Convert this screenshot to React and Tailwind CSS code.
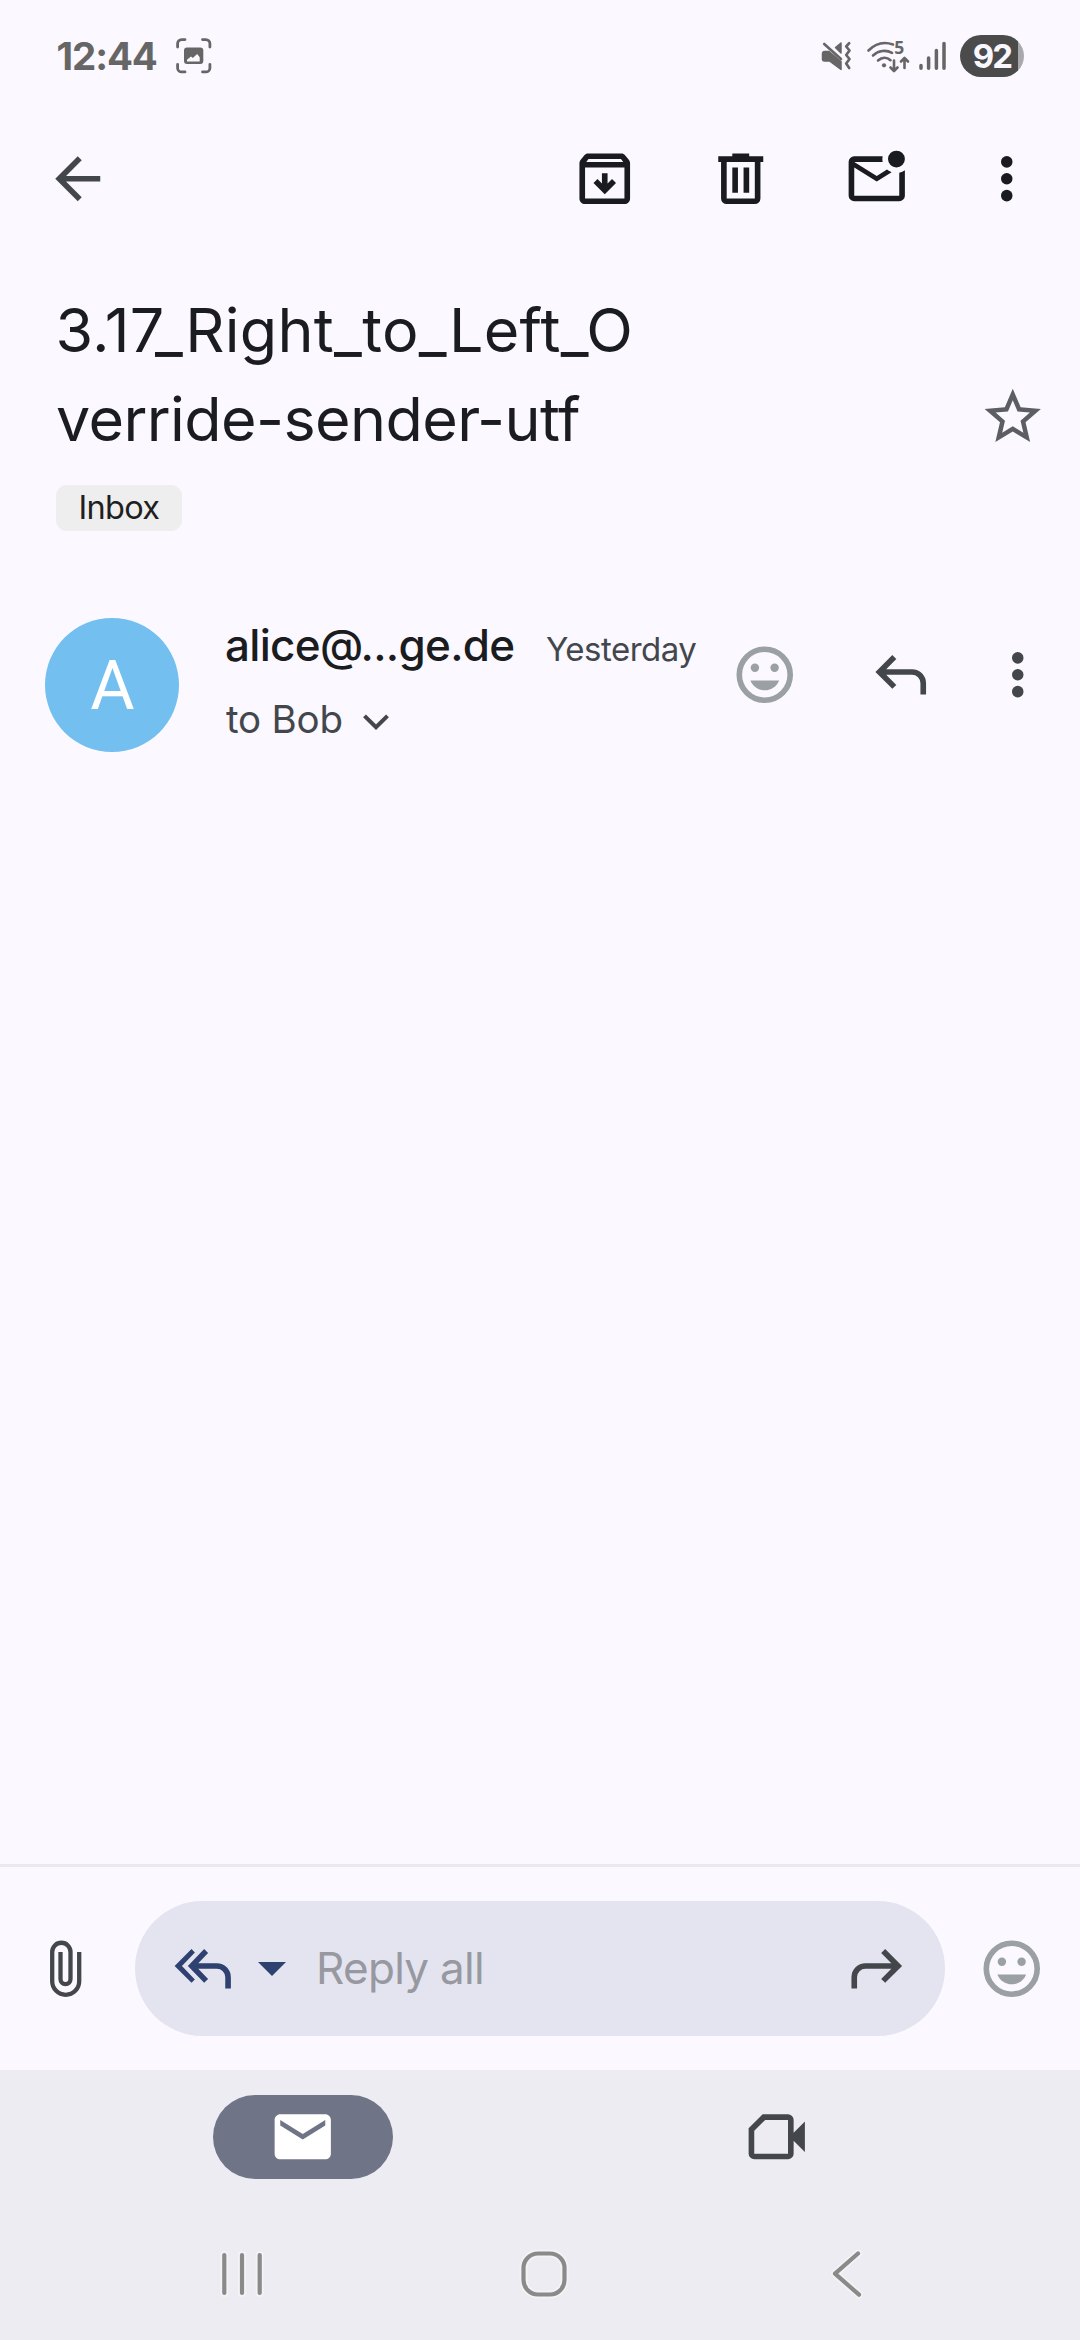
const SANS = "font-['Inter','Roboto',sans-serif]";

function Icon({ children, className = "" }) {
  return (
    <svg viewBox="0 0 24 24" fill="currentColor" className={`size-[67.5px] shrink-0 ${className}`}>
      {children}
    </svg>
  );
}

const MoreIcon = ({ className }) => (
  <Icon className={className}>
    <circle cx="12" cy="6" r="2.05" />
    <circle cx="12" cy="12" r="2.05" />
    <circle cx="12" cy="18" r="2.05" />
  </Icon>
);

const SmileIcon = ({ className }) => (
  <Icon className={className}>
    <circle cx="12" cy="12" r="9.05" fill="none" stroke="currentColor" strokeWidth="2" />
    <circle cx="8.5" cy="9.5" r="1.5" />
    <circle cx="15.5" cy="9.5" r="1.5" />
    <path d="M12 17.5c2.33 0 4.31-1.46 5.11-3.5H6.89c.8 2.04 2.78 3.5 5.11 3.5z" />
  </Icon>
);

const ReplyIcon = ({ className }) => (
  <Icon className={className}>
    <path d="M19 19v-4q0-1.25-.875-2.125T16 12H6.825l3.6 3.6L9 17l-6-6 6-6 1.425 1.4-3.6 3.6H16q2.075 0 3.538 1.462T21 15v4h-2Z" />
  </Icon>
);

function StatusBar() {
  return (
    <header className="flex h-28 items-center pl-[56.5px] pr-14 text-[#666666]">
      <span className="w-[104.5px] whitespace-nowrap text-[38.5px] font-bold leading-none tracking-[-1.1px]">12:44</span>
      <svg viewBox="0 0 36 36" className="ml-[15px] size-9" fill="none">
        <g stroke="currentColor" strokeWidth="2.8" strokeLinecap="round">
          <path d="M1.6 9V5.6a4 4 0 0 1 4-4H9M26.5 1.6h3.4a4 4 0 0 1 4 4V9M33.9 26.5v3.4a4 4 0 0 1-4 4h-3.4M9 33.9H5.6a4 4 0 0 1-4-4v-3.4" />
        </g>
        <path
          fill="currentColor"
          fillRule="evenodd"
          d="M11 9.5h13.3a3 3 0 0 1 3 3v10.6a3 3 0 0 1-3 3H11a3 3 0 0 1-3-3V12.5a3 3 0 0 1 3-3zM11 23.6h12.7v-4.3l-2.5-3.3-4.4 4-1.8-1.5-4 3.3z"
        />
      </svg>

      <svg viewBox="0 -8 126 48" className="ml-auto h-12 w-[126px]" fill="none" stroke="currentColor" strokeLinecap="round" strokeLinejoin="round">
        {/* muted speaker with vibration wave */}
        <path d="M4.500 11.500H9L21 21.500v8L9.500 21H4.500a2 2 0 0 1-2-2v-5.500a2 2 0 0 1 2-2z" fill="currentColor" strokeWidth="1.500" />
        <path d="M4.200 4L21 19" strokeWidth="2.600" />
        <path d="M15.500 7.500L21 3v10z" fill="currentColor" strokeWidth="1.500" />
        <path d="M29.200 3.200L26.200 6.500l3.300 4-3.300 4.500 3.300 4-3.300 4.500 3 4.500" strokeWidth="2.700" />
        {/* wifi */}
        <g strokeWidth="2.600">
          <path d="M48.500 10.500c7-7 16-9 24.500-6" />
          <path d="M53 15.500c5.500-5 13-6 19-2.700" />
          <path d="M58 20.500c4-3.500 9-3.500 12.500-.3" />
          <path d="M74 20.500v10M70.500 27.500l3.500 3.500 3.500-3.500M84.500 28V18M81 21.500l3.500-3.500 3.500 3.500" />
        </g>
        <circle cx="64" cy="25.300" r="2.100" fill="currentColor" stroke="none" />
        <text x="74.300" y="14.300" fontSize="17.500" fontWeight="700" fontFamily="Open Sans, sans-serif" fill="currentColor" stroke="none">5</text>
        {/* signal */}
        <path d="M101 25.500v2.700M108.600 18v10.200M116.400 10.500v17.700M124 3.500v24.700" strokeWidth="3.500" />
      </svg>

      <div className="ml-[14px] flex h-[42px] w-16 items-center justify-center rounded-full bg-linear-to-r from-[#4b4b4b] from-[91%] to-[#a9a8ad] to-[91%]">
        <span className="whitespace-nowrap text-[33px] font-bold leading-none tracking-[-1.8px] text-[#faf8ff]">92</span>
      </div>
    </header>
  );
}

function Toolbar() {
  return (
    <nav className="flex h-[133px] items-center pl-[43.75px] pr-[39.25px] text-[#191b20]">
      <Icon className="text-[#43474c]">
        <path d="M20 11H7.830l5.590-5.590L12 4l-8 8 8 8 1.410-1.410L7.830 13H20v-2z" />
      </Icon>
      <div className="ml-auto flex gap-[68.5px]">
        <Icon>
          <path d="M20.540 5.230l-1.390-1.680C18.880 3.210 18.470 3 18 3H6c-.470 0-.880.210-1.160.550L3.460 5.230C3.170 5.570 3 6.020 3 6.500V19c0 1.100.900 2 2 2h14c1.100 0 2-.900 2-2V6.500c0-.480-.170-.930-.460-1.270zM6.240 5h11.520l.830 1H5.420l.820-1zM5 19V8h14v11H5zm11-5.500l-4 4-4-4 1.410-1.410L11 13.670V10h2v3.670l1.590-1.590L16 13.500z" />
        </Icon>
        <Icon>
          <path d="M7 21q-.825 0-1.412-.587T5 19V6H4V4h5V3h6v1h5v2h-1v13q0 .825-.587 1.413T17 21H7ZM17 6H7v13h10V6ZM9 17h2V8H9v9Zm4 0h2V8h-2v9Z" />
        </Icon>
        <Icon>
          <path d="M4 20q-.825 0-1.412-.587T2 18V6q0-.825.588-1.412T4 4h10.100q-.100.500-.100 1t.100 1H4l8 5 3.650-2.275q.350.325.763.563t.862.412L12 13 4 8v10h16V9.900q.575-.125 1.075-.350T22 9v9q0 .825-.587 1.413T20 20H4Z" />
          <circle cx="19" cy="5" r="3" />
        </Icon>
      </div>
      <MoreIcon className="ml-[62.5px]" />
    </nav>
  );
}

function Subject() {
  return (
    <section className="flex pt-[41px]">
      <div className="pl-14">
        <h1 className="flex flex-col whitespace-nowrap text-[61px] leading-[89px] text-[#1a1c20]">
          <span className="-ml-[0.5px] tracking-[0.3px]">3.17_Right_to_Left_O</span>
          <span className="tracking-[-0.6px]">verride-sender-utf</span>
        </h1>
        <span className="mt-[21px] flex h-[46px] w-[126px] items-center justify-center rounded-[11px] bg-[#eeeeee] text-[32.5px] leading-none tracking-[-0.7px] text-[#1f1f1f]">
          Inbox
        </span>
      </div>
      <Icon className="ml-auto mr-[33.25px] mt-[96.5px] text-[#5c5e64]">
        <path d="M22 9.240l-7.190-.620L12 2 9.190 8.630 2 9.240l5.460 4.730L5.820 21 12 17.270 18.180 21l-1.630-7.030L22 9.240zM12 15.400l-3.760 2.270 1-4.280-3.320-2.880 4.380-.380L12 6.100l1.710 4.040 4.380.380-3.320 2.880 1 4.280L12 15.400z" />
      </Icon>
    </section>
  );
}

function Sender() {
  return (
    <section className="mt-[84px] flex h-[140px] pl-[45px] pr-[28.25px] text-[#43474c]">
      <div className="mt-[3px] flex size-[134px] items-center justify-center rounded-full bg-[#72bff0] pl-px pt-px font-['Roboto',sans-serif] text-[68px] leading-none text-white">
        A
      </div>
      <div className="ml-[46px] flex flex-col gap-[14px] whitespace-nowrap">
        <div className="flex h-[60px] items-baseline leading-[60px]">
          <span className="w-[321px] text-[44px] font-medium tracking-[-0.7px] text-[#1a1c20]">alice@...ge.de</span>
          <span className="text-[33px] tracking-[-0.5px]">Yesterday</span>
        </div>
        <div className="flex h-[60px] items-center text-[38.5px] leading-[60px] tracking-[-0.2px]">
          <span className="ml-px w-[137px]">to Bob</span>
          <svg viewBox="0 0 26 16" className="mt-[6px] h-4 w-[26px]" fill="none" stroke="currentColor" strokeWidth="4">
            <path d="M1.500 1.800L13 13.200 24.500 1.800" />
          </svg>
        </div>
      </div>
      <div className="ml-auto flex h-[120px] items-center">
        <SmileIcon className="text-[#9aa0a4]" />
        <ReplyIcon className="ml-[68px]" />
        <MoreIcon className="ml-[50px]" />
      </div>
    </section>
  );
}

function ReplyBar() {
  return (
    <section className="mt-auto flex h-[206px] items-center border-t-[3px] border-[#e8eaed] pl-[49px] pr-[34.25px] text-[#43474c]">
      <svg viewBox="0 0 34 58" className="h-[58px] w-[34px]" fill="none" stroke="currentColor" strokeWidth="4.300">
        <path d="M30.200 12v29.300a13.500 13.500 0 0 1-27 0V11.900a9.150 9.150 0 0 1 18.300 0v27.200a5 5 0 0 1-10 0V12" />
      </svg>
      <div className="ml-[52px] flex h-[135px] w-[810px] items-center rounded-full bg-[#e3e4ef] pl-[34px] pr-[34.75px]">
        <Icon className="text-[#2e4170]">
          <path d="M8 17l-6-6 6-6 1.200 1.200L4.600 11l4.600 4.800L8 17Zm12 2v-4q0-1.250-.875-2.125T17 12h-6.600l3.500 3.600-1.400 1.400-5.800-6 5.800-6 1.400 1.400L10.400 10H17q2.075 0 3.538 1.462T22 15v4h-2Z" />
        </Icon>
        <svg viewBox="0 0 28 14" className="ml-[21px] h-[14px] w-[28px] text-[#2e4170]" fill="currentColor">
          <path d="M0 0h28L14 14z" />
        </svg>
        <span className="ml-[30.5px] whitespace-nowrap pb-[2px] text-[44px] leading-none tracking-[-0.7px] text-[#9898a0]">Reply all</span>
        <ReplyIcon className="ml-auto -scale-x-100" />
      </div>
      <SmileIcon className="ml-auto text-[#9aa0a4]" />
    </section>
  );
}

function BottomTabs() {
  return (
    <nav className="flex h-[134px] items-center bg-[#edecf2] pl-[213px]">
      <div className="flex h-[84px] w-[180px] items-center justify-center rounded-full bg-[#6f7487] text-white">
        <Icon>
          <path d="M20 4H4c-1.100 0-2 .900-2 2v12c0 1.100.900 2 2 2h16c1.100 0 2-.900 2-2V6c0-1.100-.900-2-2-2zm0 4l-8 5-8-5V6l8 5 8-5v2z" />
        </Icon>
      </div>
      <Icon className="ml-[350px] text-[#43474c]">
        <path fillRule="evenodd" d="M7 4h9a2 2 0 0 1 2 2v4.600l4-4v10.800l-4-4V18a2 2 0 0 1-2 2H4a2 2 0 0 1-2-2V9zM7.900 6L4 9.900V18h12V6z" />
      </Icon>
    </nav>
  );
}

function SystemNav() {
  return (
    <footer className="flex h-[136px] items-center bg-[#edecf2] pl-[219px] pt-1 text-[#8a8a8a]">
      <svg viewBox="0 0 46 50" className="h-[50px] w-[46px]" fill="none" strokeLinecap="round">
        <path d="M5.300 6v38M23 6v38M40.700 6v38" stroke="#f3f3f6" strokeWidth="8" />
        <path d="M5.300 6v38M23 6v38M40.700 6v38" stroke="currentColor" strokeWidth="4.200" />
      </svg>
      <svg viewBox="0 0 50 50" className="ml-[254px] size-[50px]" fill="none">
        <rect x="4.500" y="4.500" width="41" height="41" rx="14.500" stroke="#f3f3f6" strokeWidth="8" />
        <rect x="4.500" y="4.500" width="41" height="41" rx="14.500" stroke="currentColor" strokeWidth="4.200" />
      </svg>
      <svg viewBox="0 0 36 50" className="ml-[260px] h-[50px] w-9" fill="none" strokeLinecap="round" strokeLinejoin="round">
        <path d="M29 4.500L6 24.700l24 21" stroke="#f3f3f6" strokeWidth="8" />
        <path d="M29 4.500L6 24.700l24 21" stroke="currentColor" strokeWidth="4.200" />
      </svg>
    </footer>
  );
}

export default function App() {
  return (
    <main className={`flex h-[2340px] w-[1080px] flex-col overflow-hidden bg-[#fbf8ff] ${SANS}`}>
      <StatusBar />
      <Toolbar />
      <Subject />
      <Sender />
      <ReplyBar />
      <BottomTabs />
      <SystemNav />
    </main>
  );
}
